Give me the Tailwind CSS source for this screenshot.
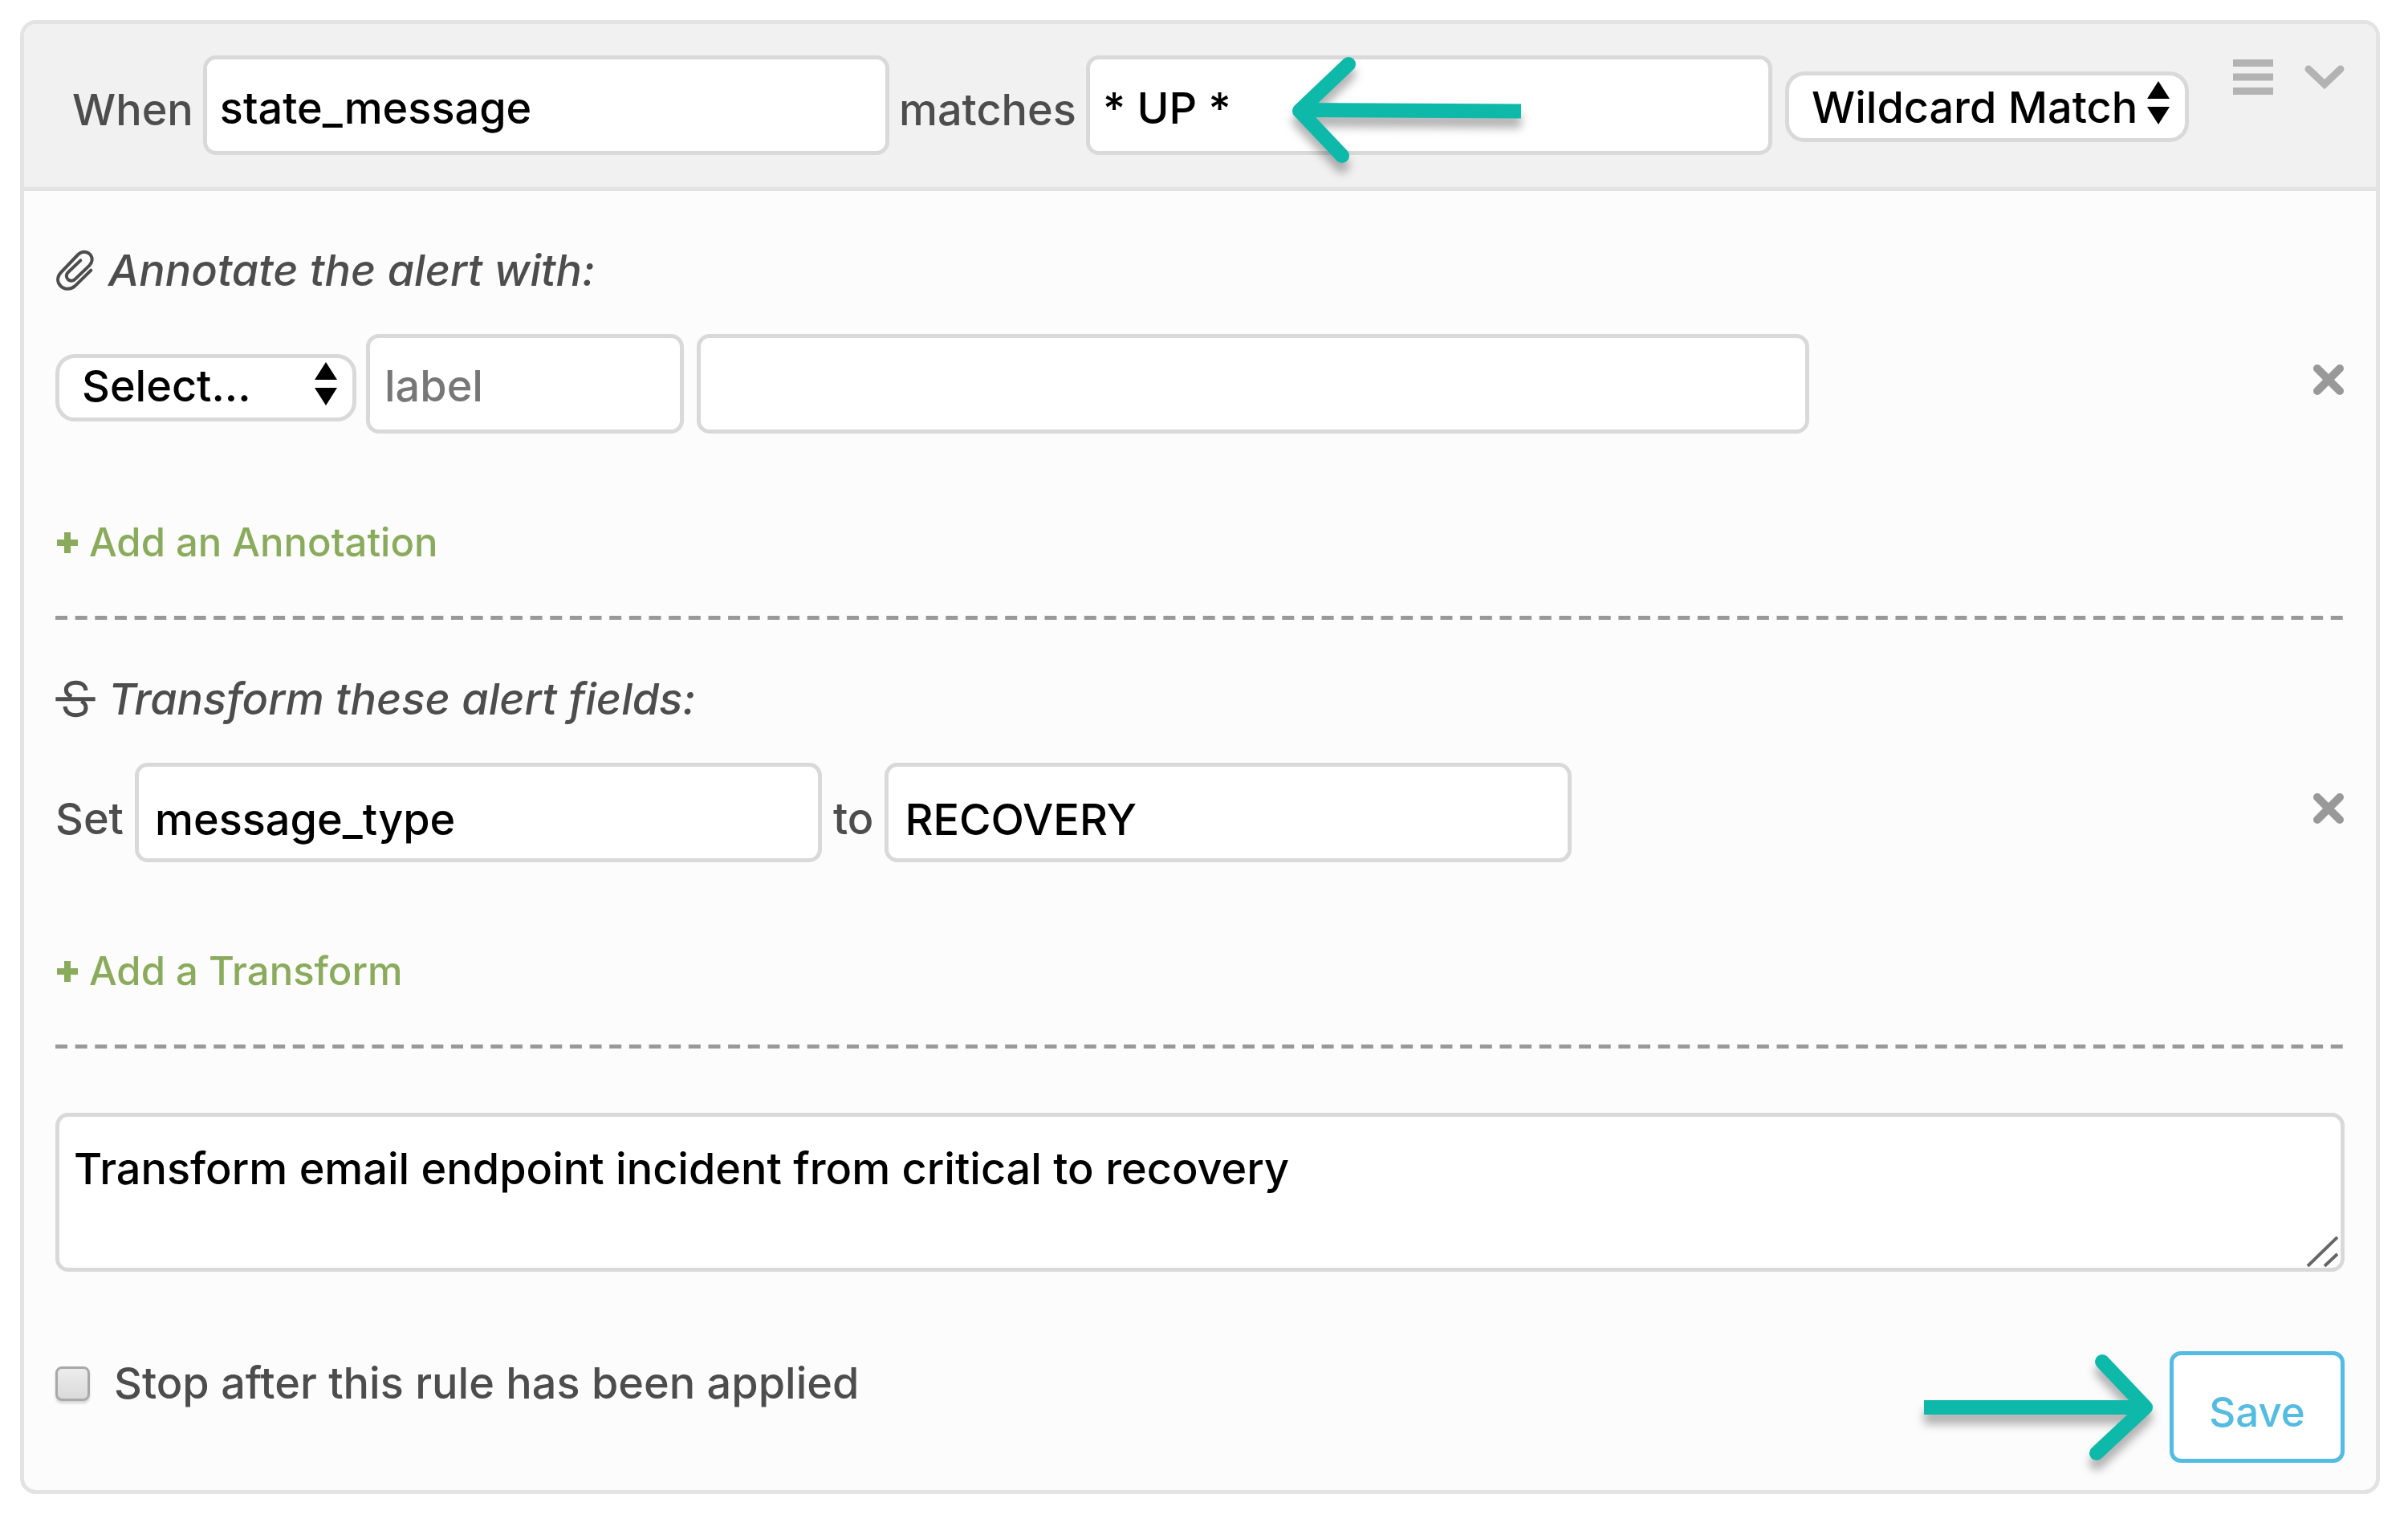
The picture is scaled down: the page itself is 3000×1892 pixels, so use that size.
<!DOCTYPE html>
<html lang="en">
<head>
<meta charset="utf-8">
<meta name="viewport" content="width=device-width, initial-scale=1">
<title>Alert rule</title>
<script src="https://cdn.jsdelivr.net/npm/@tailwindcss/browser@4"></script>
</head>
<body class="bg-white font-['Inter',sans-serif] text-[54px] leading-[60px] font-medium text-[#4d4d4d]">
<main class="py-[25px] pl-[25px] pr-[35px]">
  <form class="overflow-hidden rounded-[20px] border-5 border-[#e3e3e3] bg-[#fcfcfc]">

    <!-- Matching condition -->
    <header class="flex items-center gap-3 border-b-5 border-[#e3e3e3] bg-[#f1f1f1] pt-[39px] pr-[39px] pb-10 pl-[60px]">
      <label for="field" class="pt-3">When</label>
      <div class="min-w-0 flex-1">
        <input id="field" type="text" value="state_message" class="block h-[124px] w-full rounded-2xl border-5 border-[#d9d9d9] bg-white pt-1.5 pl-4 text-black">
      </div>
      <label for="pattern" class="pt-3">matches</label>
      <div class="relative min-w-0 flex-1">
        <input id="pattern" type="text" value="* UP *" class="block h-[124px] w-full rounded-2xl border-5 border-[#d9d9d9] bg-white pt-1.5 pl-4 text-black">
        <svg class="absolute -top-[19px] left-[236px] h-[180px] w-[320px] overflow-visible drop-shadow-[0_12px_6px_rgba(0,0,0,0.3)]" viewBox="0 0 320 180" fill="none" stroke="#0fb9aa" stroke-width="18" aria-hidden="true">
          <path d="M91 30 30 88l53 56" stroke-linecap="round" stroke-linejoin="round"/>
          <path d="M32 87 306 88.500"/>
        </svg>
      </div>
      <div class="relative mt-1 ml-1 w-[503px] shrink-0">
        <select aria-label="Match type" class="block h-[88px] w-full appearance-none rounded-[24px] border-5 border-[#d9d9d9] bg-white pt-0.5 pl-7 text-black">
          <option>Wildcard Match</option>
        </select>
        <svg class="pointer-events-none absolute top-3 right-6 h-[54px] w-7" viewBox="0 0 28 54" aria-hidden="true"><path d="M14 0 28 22H0zM14 54 0 32h28z"/></svg>
      </div>
      <div class="mt-[5px] ml-[43px] flex h-11 shrink-0 items-center gap-[39px] self-start">
        <button type="button" aria-label="Reorder rule">
          <svg class="block h-11 w-[50px]" viewBox="0 0 50 44" fill="#b3b3b3"><path d="M0 0h50v9H0zM0 17.500h50v9H0zM0 35h50v9H0z"/></svg>
        </button>
        <button type="button" aria-label="Collapse rule">
          <svg class="block h-[30px] w-[50px]" viewBox="0 0 50 30" fill="none" stroke="#b3b3b3" stroke-width="9" stroke-linecap="round"><path d="M5 5 25 24 45 5"/></svg>
        </button>
      </div>
    </header>

    <div class="px-[39px] pb-[34px]">
      <!-- Annotations -->
      <section class="pt-[69px]">
        <h2 class="flex items-center gap-4 italic">
          <svg class="h-[54px] w-[50px]" viewBox="30 30 150 160" fill="none" stroke="#4d4d4d" stroke-width="12" stroke-linecap="round" aria-hidden="true"><path d="M163 109 103 168C88 182 62 182 48 166 36 152 36 134 50 118L115 50C128 37 148 37 160 50 171 63 168 80 158 90L104 142C96 150 84 150 77 143 69 134 70 124 78 116L124 72"/></svg>
          Annotate the alert with:
        </h2>
        <div class="mt-[49px] flex items-center gap-3">
          <div class="relative mt-2.5 w-[375px] shrink-0">
            <select aria-label="Annotation type" class="block h-[84px] w-full appearance-none rounded-[24px] border-5 border-[#d9d9d9] bg-white pb-1 pl-7 text-black">
              <option>Select...</option>
            </select>
            <svg class="pointer-events-none absolute top-2.5 right-6 h-[54px] w-7" viewBox="0 0 28 54" aria-hidden="true"><path d="M14 0 28 22H0zM14 54 0 32h28z"/></svg>
          </div>
          <input type="text" aria-label="Annotation label" placeholder="label" class="h-[124px] w-[396px] rounded-2xl border-5 border-[#d9d9d9] bg-white pt-1 pl-[18px] text-black placeholder:text-[#777]">
          <input type="text" aria-label="Annotation value" class="ml-1 h-[124px] max-w-[1386px] min-w-0 flex-1 rounded-2xl border-5 border-[#d9d9d9] bg-white pt-1 pl-[18px] text-black">
          <button type="button" aria-label="Remove annotation" class="ml-auto pb-2.5">
            <svg class="block size-10" viewBox="0 0 40 40" fill="none" stroke="#999" stroke-width="10" stroke-linecap="round"><path d="m6 6 28 28M34 6 6 34"/></svg>
          </button>
        </div>
        <a href="#add-annotation" class="mt-[106px] flex items-center gap-3.5 text-[49px] text-[#8aab5b]">
          <svg class="ml-0.5 size-[26px]" viewBox="0 0 26 26" stroke="currentColor" stroke-width="8" aria-hidden="true"><path d="M13 0v26M0 13h26"/></svg>
          Add an Annotation
        </a>
        <svg class="mt-[61px] block h-[5px] w-full" aria-hidden="true"><line x1="0" y1="2.500" x2="100%" y2="2.500" stroke="#999" stroke-width="5" stroke-dasharray="15 9.650"/></svg>
      </section>

      <!-- Transforms -->
      <section class="pt-[69px]">
        <h2 class="flex items-center gap-4 italic">
          <svg class="size-[50px]" viewBox="27 50 150 150" fill="none" stroke="#4d4d4d" stroke-width="15" aria-hidden="true"><path d="M141 92C139 73 125 63 104 63 82 63 67 74 67 90 67 102 75 110 88 115M124 132C134 137 141 145 141 157 141 174 126 184 103 184 79 184 65 172 63 152"/><path d="M28 124h148"/></svg>
          Transform these alert fields:
        </h2>
        <div class="mt-[49px] flex items-center gap-3.5">
          <label for="target" class="pt-4">Set</label>
          <input id="target" type="text" value="message_type" class="h-[124px] max-w-[856px] min-w-0 flex-1 rounded-2xl border-5 border-[#d9d9d9] bg-white pt-4 pl-5 text-black">
          <label for="value" class="pt-4">to</label>
          <input id="value" type="text" value="RECOVERY" class="h-[124px] max-w-[856px] min-w-0 flex-1 rounded-2xl border-5 border-[#d9d9d9] bg-white pt-4 pl-5 text-black">
          <button type="button" aria-label="Remove transform" class="ml-auto pb-2.5">
            <svg class="block size-10" viewBox="0 0 40 40" fill="none" stroke="#999" stroke-width="10" stroke-linecap="round"><path d="m6 6 28 28M34 6 6 34"/></svg>
          </button>
        </div>
        <a href="#add-transform" class="mt-[106px] flex items-center gap-3.5 text-[49px] text-[#8aab5b]">
          <svg class="ml-0.5 size-[26px]" viewBox="0 0 26 26" stroke="currentColor" stroke-width="8" aria-hidden="true"><path d="M13 0v26M0 13h26"/></svg>
          Add a Transform
        </a>
        <svg class="mt-[61px] block h-[5px] w-full" aria-hidden="true"><line x1="0" y1="2.500" x2="100%" y2="2.500" stroke="#999" stroke-width="5" stroke-dasharray="15 9.650"/></svg>
      </section>

      <!-- Rule description -->
      <div class="relative mt-20">
        <textarea aria-label="Rule description" class="block h-[198px] w-full resize-none rounded-2xl border-5 border-[#d9d9d9] bg-white px-[18px] pt-[35px] text-black">Transform email endpoint incident from critical to recovery</textarea>
        <svg class="pointer-events-none absolute right-2 bottom-1.5 h-[38px] w-10" viewBox="0 0 40 38" fill="none" stroke="#666" stroke-width="4" aria-hidden="true"><path d="M2 37 39 1M23 37 39 22"/></svg>
      </div>

      <!-- Footer -->
      <footer class="mt-[99px] flex items-center gap-5">
        <label class="mt-2.5 flex items-center gap-[30px] self-start">
          <input type="checkbox" class="size-[43px] appearance-none rounded-lg border-3 border-[#a9a9a9] bg-linear-to-b from-[#ececec] to-[#dadada] shadow-[0_3px_3px_rgba(0,0,0,0.15)]">
          Stop after this rule has been applied
        </label>
        <svg class="ml-auto h-[132px] w-[286px] shrink-0 overflow-visible drop-shadow-[0_12px_6px_rgba(0,0,0,0.3)]" viewBox="0 0 286 132" fill="none" stroke="#0fb9aa" stroke-width="18" aria-hidden="true">
          <path d="m222 9 54 57-61 57" stroke-linecap="round" stroke-linejoin="round"/>
          <path d="M0 66h274"/>
        </svg>
        <button type="submit" class="h-[139px] w-[218px] shrink-0 rounded-[14px] border-5 border-[#54bbe2] bg-white pt-3 text-[51px] text-[#54bbe2]">Save</button>
      </footer>
    </div>
  </form>
</main>
</body>
</html>
